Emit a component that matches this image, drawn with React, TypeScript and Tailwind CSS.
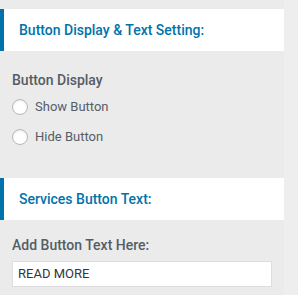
import React from "react";

const Radio = ({ label }: { label: string }) => (
  <label className="flex items-center h-[16px]">
    <span className="w-[16px] h-[16px] rounded-full border border-[#b4b9be] bg-white shadow-[inset_0_1px_2px_rgba(0,0,0,0.1)] shrink-0" />
    <span className="ml-[7px] text-[13px] text-[#555d66] leading-[16px]">{label}</span>
  </label>
);

const Header = ({ title }: { title: string }) => (
  <div className="h-[42px] border-l-4 border-[#0073aa] bg-white flex items-center pl-[15px]">
    <span className="text-[14px] font-medium text-[#0073aa]">{title}</span>
  </div>
);

export default function App() {
  return (
    <div className="w-[298px] h-[295px] bg-[#eeeeee] overflow-hidden" style={{ fontFamily: "Roboto, 'Noto Sans', sans-serif" }}>
      <div className="w-[284px] h-full bg-[#ebebeb] pt-[9px]">
        <Header title="Button Display & Text Setting:" />
        <div className="px-[12px]">
          <div className="mt-[19px] text-[14px] font-medium leading-[20px] text-[#555d66]">Button Display</div>
          <div className="mt-[9px] flex flex-col gap-[14px]">
            <Radio label="Show Button" />
            <Radio label="Hide Button" />
          </div>
        </div>
        <div className="mt-[33px]">
          <Header title="Services Button Text:" />
        </div>
        <div className="px-[12px]">
          <div className="mt-[15px] text-[14px] font-medium leading-[20px] text-[#555d66]">Add Button Text Here:</div>
          <div className="mt-[6px] w-[260px] h-[26px] border border-[#dddddd] bg-white flex items-center px-[5px] text-[13px] text-[#32373c]">READ MORE</div>
        </div>
      </div>
    </div>
  );
}
